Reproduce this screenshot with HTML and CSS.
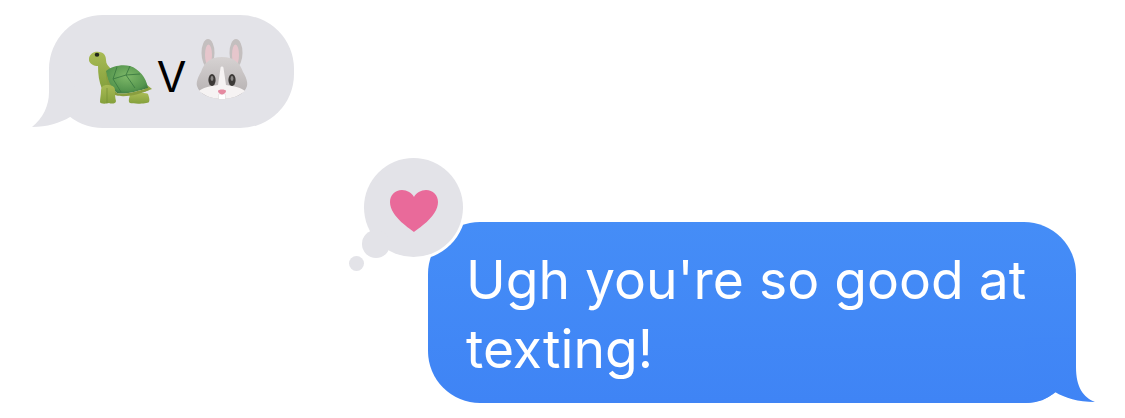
FILE: index.html
```html
<!DOCTYPE html>
<html lang="en">
<head>
    <meta charset="UTF-8">
    <meta name="viewport" content="width=device-width, initial-scale=1.0">
    <title>Messages</title>
    <link rel="stylesheet" href="styles.css">
</head>
<body>
    <div class="thread">
        <div class="bubble incoming">
            <svg class="tail tail-in" viewBox="0 0 44 56" width="44" height="56">
                <path d="M17 0L17 20C17 34 11 46 0 55C15 55 28 51 38 45L44 0Z" fill="#e3e3e8"/>
            </svg>
            <svg class="emoji turtle" viewBox="0 0 63 53" width="63" height="53">
                <defs>
                    <linearGradient id="skin" x1="0" y1="0" x2="0" y2="1">
                        <stop offset="0" stop-color="#a9bb55"/>
                        <stop offset="1" stop-color="#84a03c"/>
                    </linearGradient>
                    <radialGradient id="shell" cx="0.5" cy="0.4" r="0.7">
                        <stop offset="0" stop-color="#7db868"/>
                        <stop offset="0.7" stop-color="#55954e"/>
                        <stop offset="1" stop-color="#2f6a3c"/>
                    </radialGradient>
                </defs>
                <path d="M58 34L63 38L55 41Z" fill="#8fa643"/>
                <path d="M0 7C1 3 5 0 10 1C15 1 17 5 17 9C17 13 19 15 23 19L28 37L13 38C10 31 9 23 9 15C4 15 -1 12 0 7Z" fill="url(#skin)"/>
                <path d="M41 44C41 42 58 41 59 43C60 46 61 49 60 51C58 53 45 53 41 52C39 51 40 47 41 44Z" fill="url(#skin)"/>
                <path d="M17 20C23 15 33 13 41 15C50 18 57 26 59 37C49 40 36 44 28 42C22 37 18 28 17 20Z" fill="url(#shell)"/>
                <path d="M17 20C18 28 22 37 28 42C36 44 49 40 59 37L60 39C50 44 34 47 26 44C20 38 16 29 17 20Z" fill="#8a9e3f"/>
                <path d="M28 16L24 28L32 41M24 28L37 24L46 37M37 24L41 15M37 24L51 23" fill="none" stroke="#3c7a42" stroke-width="0.9"/>
                <path d="M12 40C12 36 14 34 18 34C22 34 26 35 26 39C26 43 26 47 27 50C27 53 22 53 20 52C17 53 11 53 11 51C11 47 12 44 12 40Z" fill="url(#skin)"/>
                <path d="M18 37L18 52" stroke="#748c34" stroke-width="0.7"/>
                <ellipse cx="8" cy="3.8" rx="2.3" ry="2" fill="#23281a"/>
            </svg>
            <span class="versus">V</span>
            <svg class="emoji rabbit" viewBox="0 0 52 61" width="52" height="61">
                <defs>
                    <linearGradient id="fur" x1="0" y1="0" x2="0" y2="1">
                        <stop offset="0" stop-color="#d6d2d2"/>
                        <stop offset="1" stop-color="#b3aeaf"/>
                    </linearGradient>
                </defs>
                <ellipse cx="12" cy="14" rx="6.5" ry="14" fill="#c4bfbf"/>
                <ellipse cx="40" cy="14" rx="6.5" ry="14" fill="#c4bfbf"/>
                <ellipse cx="12.5" cy="16" rx="3.5" ry="10.5" fill="#e6c6cc"/>
                <ellipse cx="39.5" cy="16" rx="3.5" ry="10.5" fill="#e6c6cc"/>
                <path d="M26 18C38 18 44 24 47 33C50 38 52 43 51 47C49 55 38 60 26 60C14 60 3 55 1 47C0 43 2 38 5 33C8 24 14 18 26 18Z" fill="url(#fur)"/>
                <path d="M24.5 29C24.5 27 27.5 27 27.5 29L30 46C38 47 46 49 49 52C43 57 35 60 26 60C17 60 9 57 3 52C6 49 14 47 22 46Z" fill="#f6f3f3"/>
                <ellipse cx="16" cy="41" rx="3.6" ry="6" fill="#3c3937"/>
                <ellipse cx="36" cy="41" rx="3.6" ry="6" fill="#3c3937"/>
                <ellipse cx="16" cy="39.5" rx="1.4" ry="2.4" fill="#8b8887"/>
                <ellipse cx="36" cy="39.5" rx="1.4" ry="2.4" fill="#8b8887"/>
                <rect x="22.5" y="55" width="7" height="5.5" rx="1" fill="#ffffff" stroke="#cfcaca" stroke-width="0.4"/>
                <path d="M22 52C22 50 30 50 30 52C30 54 27 55.5 26 55.5C25 55.5 22 54 22 52Z" fill="#e58aa0"/>
            </svg>
        </div>

        <div class="bubble outgoing">
            <svg class="tail tail-out" viewBox="0 0 70 66" width="70" height="66">
                <defs>
                    <linearGradient id="tailFill" x1="0" y1="0" x2="0" y2="1">
                        <stop offset="0" stop-color="#4187f6"/>
                        <stop offset="1" stop-color="#3f84f5"/>
                    </linearGradient>
                </defs>
                <path d="M0 66C14 66 22 62 30 55C40 61 53 65 70 65C58 60 51 50 51 30L51 0L0 0Z" fill="url(#tailFill)"/>
            </svg>
            <p class="message">Ugh you're so good at texting!</p>
            <div class="tapback">
                <span class="dot dot-small"></span>
                <span class="tapback-circle">
                    <svg viewBox="0 0 48 42" width="48" height="42">
                        <path d="M24 42C22 40 0 27 0 12C0 5 5 0 12 0C17 0 22 3 24 7C26 3 31 0 36 0C43 0 48 5 48 12C48 27 26 40 24 42Z" fill="#e96a9a"/>
                    </svg>
                </span>
                <span class="dot dot-mid"></span>
            </div>
        </div>
    </div>
</body>
</html>
```

FILE: styles.css
```css
body {
    margin: 0;
    background-color: #fff;
    font-family: Inter, "Liberation Sans", sans-serif;
}
.thread {
    display: flex;
    flex-direction: column;
    align-items: flex-start;
    padding-top: 15px;
}
.bubble {
    position: relative;
    box-sizing: border-box;
}
.tail {
    position: absolute;
    display: block;
}
.incoming {
    display: flex;
    align-items: center;
    width: 245px;
    height: 113px;
    margin-left: 49px;
    padding: 6px 0 0 40px;
    border-radius: 54px;
    background-color: #e3e3e8;
}
.tail-in {
    left: -17px;
    bottom: 0;
}
.emoji {
    display: block;
    position: relative;
}
.turtle {
    margin-top: 5px;
}
.versus {
    position: relative;
    width: 39px;
    margin-top: 4px;
    text-align: center;
    font-size: 43px;
    line-height: 1;
    color: #000;
}
.rabbit {
    margin-top: -10px;
    margin-left: 5px;
}
.outgoing {
    width: 648px;
    height: 181px;
    margin: 94px 0 0 428px;
    padding: 23px 38px 0;
    border-radius: 52px;
    background: linear-gradient(#458df7, #3f84f5);
}
.tail-out {
    right: -19px;
    bottom: 0;
}
.message {
    position: relative;
    margin: 0;
    font-size: 53.4px;
    line-height: 69px;
    color: #fff;
}
.tapback {
    position: absolute;
    left: -80px;
    top: -64px;
}
.tapback-circle {
    position: absolute;
    left: 16px;
    top: 0;
    display: flex;
    align-items: center;
    justify-content: center;
    width: 99px;
    height: 99px;
    border-radius: 50%;
    background-color: #e3e3e8;
    box-shadow: 0 0 0 3px #fff;
}
.tapback-circle svg {
    display: block;
    margin-top: 6px;
}
.dot {
    position: absolute;
    border-radius: 50%;
    background-color: #e3e3e8;
}
.dot-mid {
    left: 14px;
    top: 72px;
    width: 28px;
    height: 28px;
}
.dot-small {
    left: 1px;
    top: 98px;
    width: 15px;
    height: 15px;
}
```
